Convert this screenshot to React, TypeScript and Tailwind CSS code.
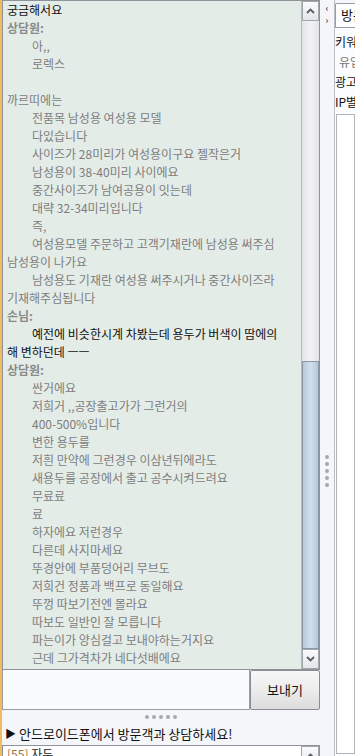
import React from "react";

type Line = { text: string; kind?: "gray" | "black" | "name"; indent?: boolean };

const lines: Line[] = [
  { text: "궁금해서요", kind: "black" },
  { text: "상담원:", kind: "name" },
  { text: "아,,", indent: true },
  { text: "로렉스", indent: true },
  { text: "" },
  { text: "까르띠에는" },
  { text: "전품목 남성용 여성용 모델", indent: true },
  { text: "다있습니다", indent: true },
  { text: "사이즈가 28미리가 여성용이구요 젤작은거", indent: true },
  { text: "남성용이 38-40미리 사이에요", indent: true },
  { text: "중간사이즈가 남여공용이 잇는데", indent: true },
  { text: "대략 32-34미리입니다", indent: true },
  { text: "즉,", indent: true },
  { text: "여성용모델 주문하고 고객기재란에 남성용 써주심", indent: true },
  { text: "남성용이 나가요" },
  { text: "남성용도 기재란 여성용 써주시거나 중간사이즈라", indent: true },
  { text: "기재해주심됩니다" },
  { text: "손님:", kind: "name" },
  { text: "예전에 비슷한시계 차봤는데 용두가 버색이 땀에의", kind: "black", indent: true },
  { text: "해 변하던데 ㅡㅡ", kind: "black" },
  { text: "상담원:", kind: "name" },
  { text: "싼거에요", indent: true },
  { text: "저희거 ,,공장출고가가 그런거의", indent: true },
  { text: "400-500%입니다", indent: true },
  { text: "변한 용두를", indent: true },
  { text: "저흰 만약에 그런경우 이삼년뒤에라도", indent: true },
  { text: "새용두를 공장에서 출고 공수시켜드려요", indent: true },
  { text: "무료료", indent: true },
  { text: "료", indent: true },
  { text: "하자에요 저런경우", indent: true },
  { text: "다른데 사지마세요", indent: true },
  { text: "뚜경안에 부품덩어리 무브도", indent: true },
  { text: "저희건 정품과 백프로 동일해요", indent: true },
  { text: "뚜껑 따보기전엔 몰라요", indent: true },
  { text: "따보도 일반인 잘 모릅니다", indent: true },
  { text: "파는이가 양심걸고 보내야하는거지요", indent: true },
  { text: "근데 그가격차가 네다섯배에요", indent: true },
];

// ---------------------- small chevron used by scroll buttons -----------------------
const Chevron = ({ up }: { up?: boolean }) => (
  <svg width="9" height="6" viewBox="0 0 9 6">
    <path
      d={up ? "M1 5 L4.5 1.5 L8 5" : "M1 1 L4.5 4.5 L8 1"}
      fill="none"
      stroke="#5a5d63"
      strokeWidth="1.8"
    />
  </svg>
);

const ScrollButton = ({ up }: { up?: boolean }) => (
  <div className="h-[20px] shrink-0 flex items-center justify-center border border-[#a3a6ad] bg-gradient-to-b from-[#fbfbfc] to-[#e4e5ea]">
    <Chevron up={up} />
  </div>
);

const Dots = ({ vertical }: { vertical?: boolean }) => (
  <div className={vertical ? "flex flex-col gap-[3px]" : "flex gap-[3px]"}>
    {[0, 1, 2, 3, 4].map((i) => (
      <span key={i} className="w-[4px] h-[4px] rounded-full bg-[#a6a9ae]" />
    ))}
  </div>
);

const App = () => {
  return (
    <div
      className="w-[355px] h-[756px] overflow-hidden flex bg-[#f4f6fa] text-[12px]"
      style={{ fontFamily: '"Noto Sans CJK KR", "Noto Sans", sans-serif' }}
    >
      {/* orange edge */}
      <div className="w-[2px] shrink-0 bg-[#f1bb62]" />

      {/* ---------------------- chat column ----------------------- */}
      <div className="w-[318px] shrink-0 flex flex-col">
        <div className="h-[670px] shrink-0 flex border border-[#8e9299]">
          <div className="flex-1 min-w-0 bg-[#e4ece8] overflow-hidden pl-[4px]">
            {lines.map((l, i) => (
              <div
                key={i}
                className={`h-[18px] leading-[18px] whitespace-nowrap ${
                  l.indent ? "pl-[25px]" : ""
                } ${
                  l.kind === "black"
                    ? "text-[#111111]"
                    : l.kind === "name"
                    ? "text-[#8a8a8a] font-bold"
                    : "text-[#7d7d7d]"
                }`}
              >
                {l.text}
              </div>
            ))}
          </div>
          <div className="w-[18px] shrink-0 flex flex-col bg-gradient-to-r from-[#e3e4e9] via-[#f3f3f6] to-[#e3e4e9] border-l border-[#b7b9bf]">
            <ScrollButton up />
            <div className="flex-1 flex flex-col justify-end">
              <div className="h-[288px] border border-[#8a96a6] bg-gradient-to-r from-[#b5c8dc] via-[#d3e0ec] to-[#b5c8dc]" />
            </div>
            <ScrollButton />
          </div>
        </div>

        {/* input row */}
        <div className="h-[40px] shrink-0 flex">
          <div className="w-[248px] border border-[#9a9da3] border-t-0 bg-[#fafbfd]" />
          <button className="w-[70px] border border-[#8a8c90] rounded-[2px] bg-gradient-to-b from-[#f7f7f7] via-[#ececec] to-[#dcdcdc] text-[13px] text-[#111]">
            보내기
          </button>
        </div>

        <div className="h-[14px] shrink-0 flex items-center justify-center">
          <Dots />
        </div>

        <div className="h-[19px] shrink-0 flex items-center pl-[3px] text-[13px] text-[#111] whitespace-nowrap">
          <span className="text-[11px] mr-[3px]">▶</span>
          안드로이드폰에서 방문객과 상담하세요!
        </div>

        <div className="flex-1 min-h-0 mt-[2px] flex border border-[#8e9299] border-b-0 bg-white overflow-hidden">
          <div className="flex-1 pl-[4px] leading-[16px] text-[#222]">
            <span className="text-[#a07040]">[55]</span> 자두
          </div>
          <div className="w-[18px]">
            <ScrollButton up />
          </div>
        </div>
      </div>

      {/* ---------------------- splitter ----------------------- */}
      <div className="w-[14px] shrink-0 flex flex-col items-center">
        <div className="pt-[3px] flex flex-col text-[9px] leading-[12px] text-[#555] font-bold">
          <span>‹</span>
          <span>›</span>
        </div>
        <div className="mt-[428px]">
          <Dots vertical />
        </div>
      </div>

      {/* ---------------------- right panel ----------------------- */}
      <div className="flex-1 min-w-0 flex flex-col border-l border-[#b9bdc5] pt-[3px] overflow-hidden">
        <div className="h-[24px] shrink-0 border border-[#9a9ea6] border-b-0 border-r-0 rounded-tl-[2px] bg-white pl-[5px] text-[13px] leading-[22px] text-[#111] whitespace-nowrap overflow-hidden">
          방문자
        </div>
        <div className="flex-1 border-t border-[#9a9ea6] bg-[#fbfcfd] pt-[4px] text-[12px] leading-[20px] whitespace-nowrap overflow-hidden">
          <div className="text-[#111]">키워드</div>
          <div className="pl-[4px] text-[#777]">유입</div>
          <div className="text-[#111]">광고</div>
          <div className="text-[#111]">IP별</div>
          <div className="ml-[1px] mt-[2px] h-[640px] border border-[#b0b4bb] bg-white" />
        </div>
      </div>
    </div>
  );
};

export default App;
